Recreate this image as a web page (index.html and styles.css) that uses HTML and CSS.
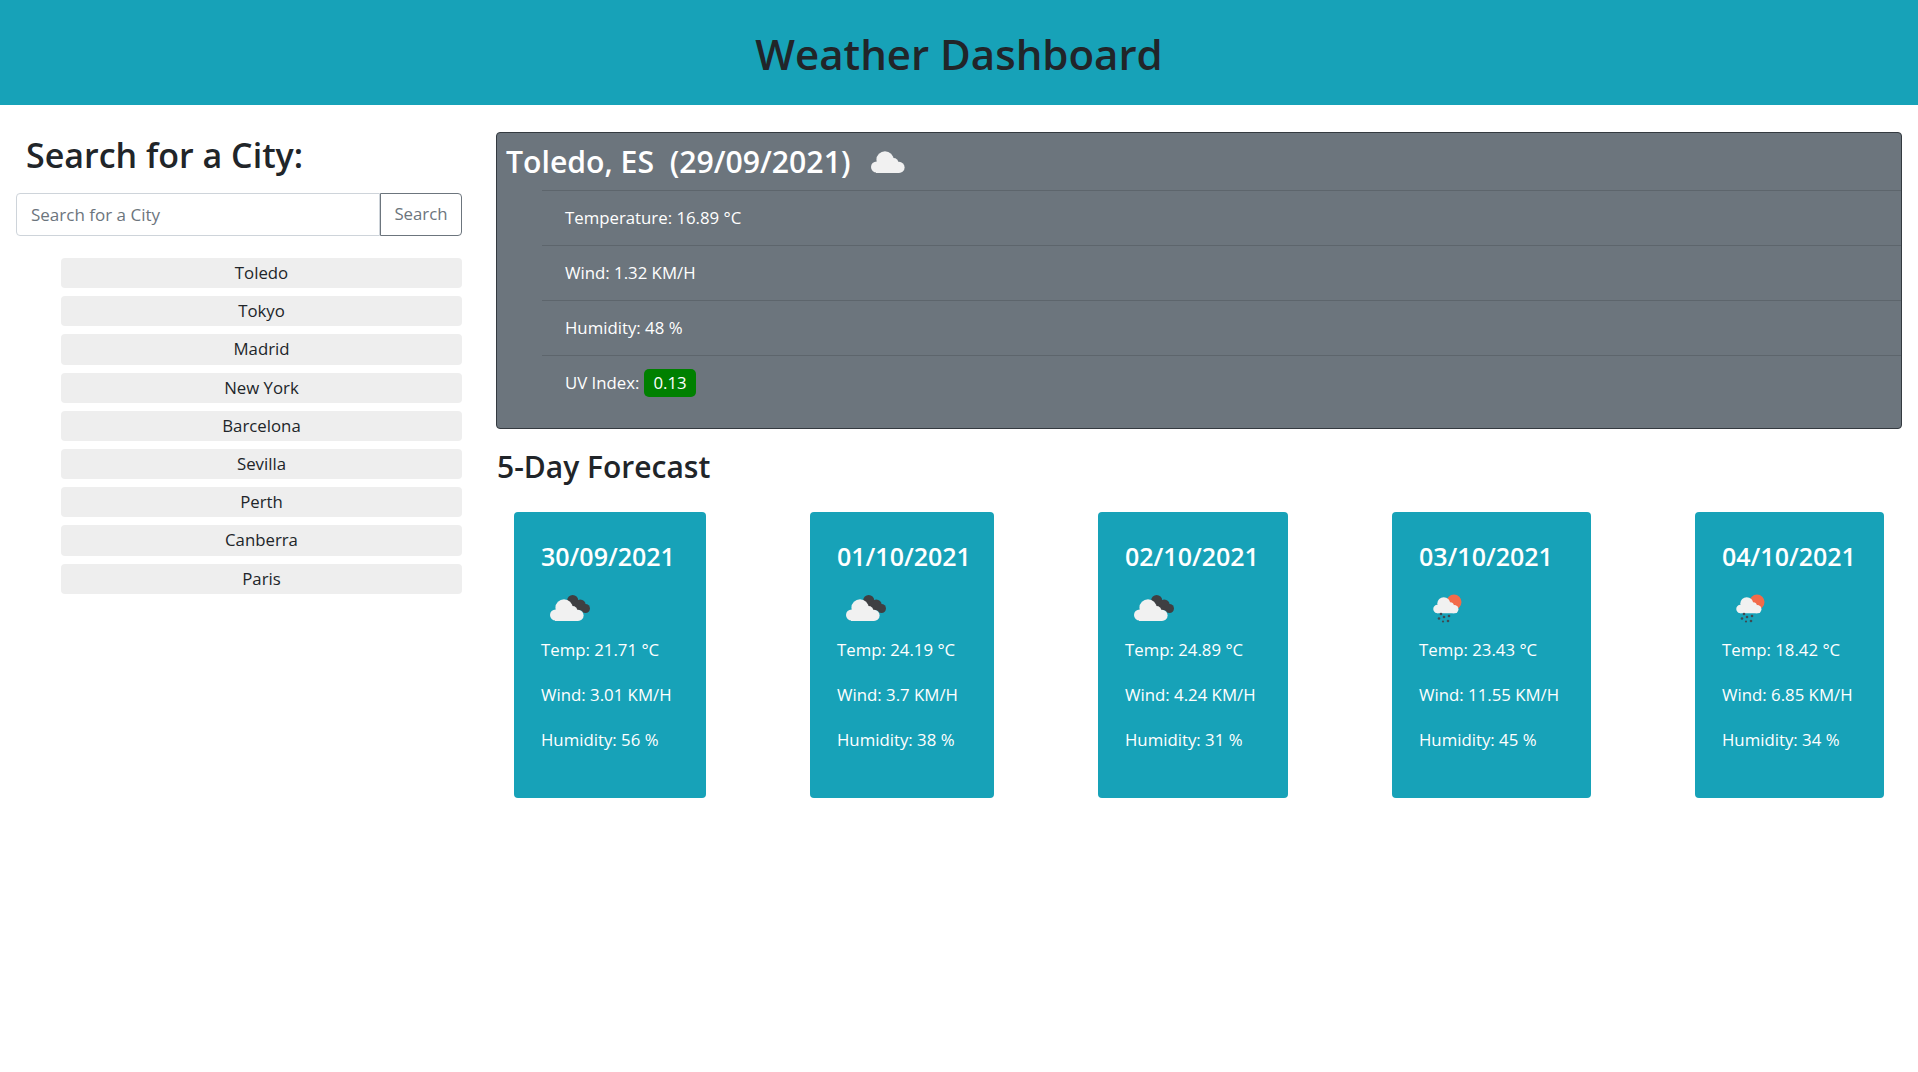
FILE: index.html
```html
<!DOCTYPE html>
<html lang="en">
<head>
<meta charset="utf-8">
<title>Weather Dashboard</title>
<link rel="stylesheet" href="styles.css">
</head>
<body>
<svg class="defs" width="0" height="0" aria-hidden="true">
  <defs>
    <symbol id="cloud" viewBox="0 0 34 22">
      <g fill="#f1f1f1">
        <circle cx="5.6" cy="16" r="5.6"/>
        <circle cx="14" cy="8.8" r="8.6"/>
        <circle cx="22.5" cy="12" r="5"/>
        <circle cx="28" cy="16.4" r="5.6"/>
        <rect x="5" y="12" width="23" height="10"/>
      </g>
    </symbol>
    <symbol id="dark-cloud" viewBox="0 0 50 50">
      <g fill="#3f3f42">
        <circle cx="31.7" cy="16.5" r="5.5"/>
        <circle cx="39.2" cy="21" r="5.5"/>
        <circle cx="44.5" cy="24.5" r="4.5"/>
        <rect x="30" y="18" width="12" height="8"/>
      </g>
      <use href="#cloud" x="9" y="15" width="34" height="22"/>
    </symbol>
    <symbol id="sun-rain" viewBox="0 0 50 50">
      <circle cx="35" cy="18" r="7.5" fill="#f26b4a"/>
      <use href="#cloud" x="14" y="13" width="26" height="16.5"/>
      <g fill="#3f4a52">
        <circle cx="22" cy="30" r="1.3"/>
        <circle cx="30" cy="32" r="1.3"/>
        <circle cx="25" cy="33" r="1.3"/>
        <circle cx="20" cy="34.5" r="1.3"/>
        <circle cx="29" cy="37" r="1.3"/>
        <circle cx="24" cy="37.5" r="1.1"/>
      </g>
    </symbol>
  </defs>
</svg>

<header class="top-bar"><h1 class="top-title">Weather Dashboard</h1></header>

<div class="layout">
  <aside class="sidebar">
    <h2 class="search-title">Search for a City:</h2>
    <form class="search-group">
      <input class="search-input" type="text" placeholder="Search for a City">
      <button class="search-btn" type="button">Search</button>
    </form>
    <ul class="city-list">
      <li class="city">Toledo</li>
      <li class="city">Tokyo</li>
      <li class="city">Madrid</li>
      <li class="city">New York</li>
      <li class="city">Barcelona</li>
      <li class="city">Sevilla</li>
      <li class="city">Perth</li>
      <li class="city">Canberra</li>
      <li class="city">Paris</li>
    </ul>
  </aside>

  <main class="content">
    <section class="current">
      <h2 class="current-title">
        <span>Toledo, ES&nbsp; (29/09/2021)</span>
        <svg class="current-icon" width="34" height="22"><use href="#cloud"/></svg>
      </h2>
      <ul class="stats">
        <li class="stat">Temperature: 16.89 °C</li>
        <li class="stat">Wind: 1.32 KM/H</li>
        <li class="stat">Humidity: 48 %</li>
        <li class="stat">UV Index: <span class="uv">0.13</span></li>
      </ul>
    </section>

    <h3 class="forecast-title">5-Day Forecast</h3>
    <div class="forecast">
      <article class="card">
        <h4 class="card-date">30/09/2021</h4>
        <svg class="card-icon" width="50" height="50"><use href="#dark-cloud"/></svg>
        <p class="card-line">Temp: 21.71 °C</p>
        <p class="card-line">Wind: 3.01 KM/H</p>
        <p class="card-line">Humidity: 56 %</p>
      </article>
      <article class="card">
        <h4 class="card-date">01/10/2021</h4>
        <svg class="card-icon" width="50" height="50"><use href="#dark-cloud"/></svg>
        <p class="card-line">Temp: 24.19 °C</p>
        <p class="card-line">Wind: 3.7 KM/H</p>
        <p class="card-line">Humidity: 38 %</p>
      </article>
      <article class="card">
        <h4 class="card-date">02/10/2021</h4>
        <svg class="card-icon" width="50" height="50"><use href="#dark-cloud"/></svg>
        <p class="card-line">Temp: 24.89 °C</p>
        <p class="card-line">Wind: 4.24 KM/H</p>
        <p class="card-line">Humidity: 31 %</p>
      </article>
      <article class="card">
        <h4 class="card-date">03/10/2021</h4>
        <svg class="card-icon" width="50" height="50"><use href="#sun-rain"/></svg>
        <p class="card-line">Temp: 23.43 °C</p>
        <p class="card-line">Wind: 11.55 KM/H</p>
        <p class="card-line">Humidity: 45 %</p>
      </article>
      <article class="card">
        <h4 class="card-date">04/10/2021</h4>
        <svg class="card-icon" width="50" height="50"><use href="#sun-rain"/></svg>
        <p class="card-line">Temp: 18.42 °C</p>
        <p class="card-line">Wind: 6.85 KM/H</p>
        <p class="card-line">Humidity: 34 %</p>
      </article>
    </div>
  </main>
</div>
</body>
</html>
```
FILE: styles.css
```css
* { box-sizing: border-box; }
html, body { margin: 0; padding: 0; }
body {
  font-family: "Open Sans", "Noto Sans", sans-serif;
  font-size: 16.8px;
  line-height: 24px;
  color: #212529;
  background: #fff;
}
.defs { position: absolute; }

.top-bar {
  height: 105px;
  background: #17a2b8;
  display: flex;
  align-items: center;
  justify-content: center;
}
.top-title {
  margin: 0;
  font-size: 42px;
  line-height: 48px;
  font-weight: 600;
  position: relative;
  top: 1px;
}

.layout { display: flex; }

.sidebar {
  width: 478px;
  flex: none;
  padding: 33px 16px 0;
}
.search-title {
  margin: 0 0 21px 10px;
  font-size: 34px;
  line-height: 34px;
  font-weight: 600;
}
.search-group { display: flex; height: 43px; }
.search-input {
  flex: none;
  width: 364px;
  height: 43px;
  padding: 0 14px;
  border: 1px solid #ced4da;
  border-radius: 4px 0 0 4px;
  font: 17px/24px "Open Sans", sans-serif;
  color: #495057;
  outline: none;
}
.search-input::placeholder { color: #6c757d; opacity: 1; }
.search-btn {
  flex: none;
  width: 82px;
  height: 43px;
  padding: 0 0 1px;
  border: 1px solid #6c757d;
  border-radius: 0 4px 4px 0;
  background: #fff;
  color: #6c757d;
  font: 16.8px/24px "Open Sans", sans-serif;
}

.city-list {
  list-style: none;
  margin: 22px 0 0 45px;
  padding: 0;
  display: flex;
  flex-direction: column;
  gap: 8px;
}
.city {
  height: 30.2px;
  line-height: 30px;
  background: #eee;
  border-radius: 4px;
  text-align: center;
  color: #212529;
}

.content {
  flex: none;
  width: 1406px;
  margin: 27px 16px 0 18px;
}
.current {
  height: 297px;
  background: #6c757d;
  border: 1px solid #343a40;
  border-radius: 4px;
  color: #fff;
}
.current-title {
  margin: 0;
  padding: 0 0 0 9px;
  height: 57px;
  display: flex;
  align-items: center;
  gap: 21px;
  font-size: 30.2px;
  line-height: 40px;
  font-weight: 600;
}
.stats {
  list-style: none;
  margin: 0 0 0 45px;
  padding: 0;
}
.stat {
  height: 55px;
  padding: 0 0 0 23px;
  display: flex;
  align-items: center;
  gap: 5px;
  border-top: 1px solid #5d656c;
}
.uv {
  background: #008000;
  color: #fff;
  border-radius: 5px;
  padding: 1px 9px;
  line-height: 26px;
}

.forecast-title {
  margin: 21px 0 28px 1px;
  font-size: 30px;
  line-height: 34px;
  font-weight: 600;
}
.forecast {
  display: grid;
  grid-template-columns: 192px 184px 190px 199px 189px;
  column-gap: 104px;
  margin-left: 18px;
}
.card {
  height: 286px;
  background: #17a2b8;
  border-radius: 4px;
  color: #fff;
  padding: 28px 0 0 27px;
}
.card-date {
  margin: 0;
  font-size: 25px;
  line-height: 32px;
  font-weight: 600;
}
.card-icon {
  display: block;
  margin: 12px 0 4px;
}
.card-line {
  margin: 0 0 21px;
}
```
